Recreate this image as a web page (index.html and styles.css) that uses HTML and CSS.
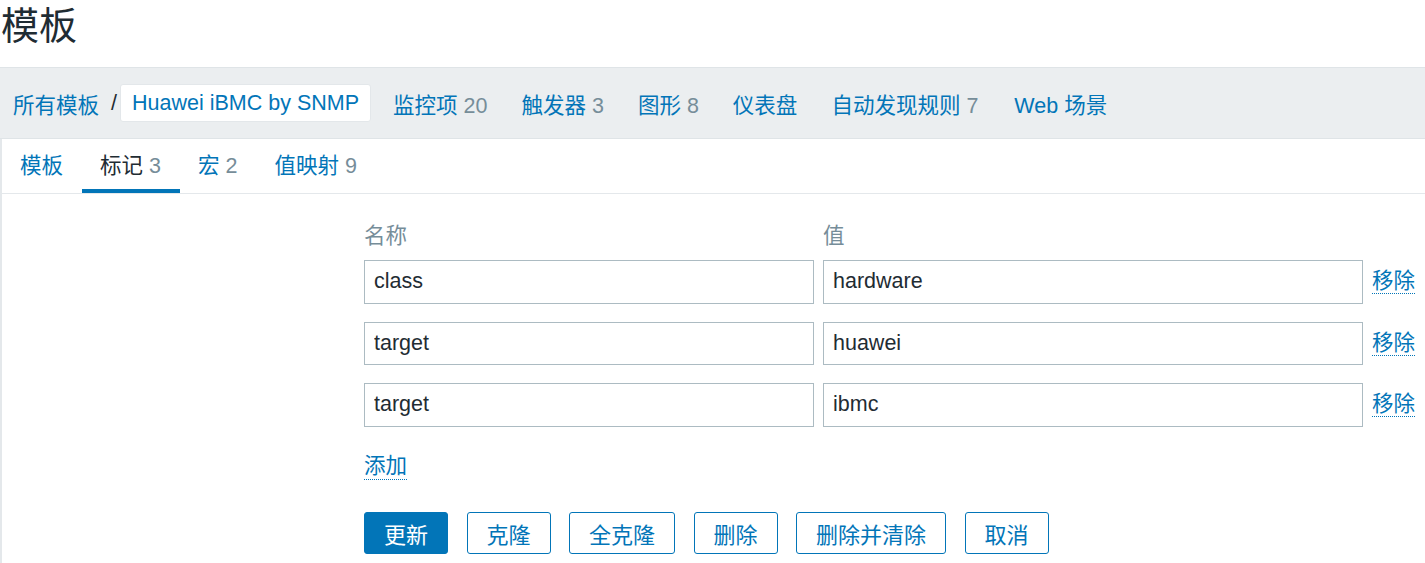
FILE: index.html
```html
<!DOCTYPE html>
<html lang="zh-CN">
<head>
<meta charset="utf-8">
<title>模板</title>
<link rel="stylesheet" href="styles.css">
</head>
<body>
<header class="page-header">
  <h1 class="page-title">模板</h1>
</header>
<nav class="header-bar">
  <div class="breadcrumbs">
    <a class="link" href="#">所有模板</a>
    <span class="crumb-sep">/</span>
    <span class="crumb-current"><a class="link" href="#">Huawei iBMC by SNMP</a></span>
  </div>
  <ul class="object-nav">
    <li><a class="link" href="#">监控项</a> <span class="count">20</span></li>
    <li><a class="link" href="#">触发器</a> <span class="count">3</span></li>
    <li><a class="link" href="#">图形</a> <span class="count">8</span></li>
    <li><a class="link" href="#">仪表盘</a></li>
    <li><a class="link" href="#">自动发现规则</a> <span class="count">7</span></li>
    <li><a class="link" href="#">Web 场景</a></li>
  </ul>
</nav>
<main class="content">
  <ul class="tabs">
    <li class="tab"><a class="link" href="#">模板</a></li>
    <li class="tab tab-active"><span>标记</span> <span class="count">3</span></li>
    <li class="tab"><a class="link" href="#">宏</a> <span class="count">2</span></li>
    <li class="tab"><a class="link" href="#">值映射</a> <span class="count">9</span></li>
  </ul>
  <form class="tag-form">
    <div class="tag-head">
      <span class="col-name">名称</span>
      <span class="col-value">值</span>
    </div>
    <div class="tag-row">
      <input class="field field-name" type="text" value="class">
      <input class="field field-value" type="text" value="hardware">
      <a class="link dotted" href="#">移除</a>
    </div>
    <div class="tag-row">
      <input class="field field-name" type="text" value="target">
      <input class="field field-value" type="text" value="huawei">
      <a class="link dotted" href="#">移除</a>
    </div>
    <div class="tag-row">
      <input class="field field-name" type="text" value="target">
      <input class="field field-value" type="text" value="ibmc">
      <a class="link dotted" href="#">移除</a>
    </div>
    <div class="add-row">
      <a class="link dotted" href="#">添加</a>
    </div>
    <div class="buttons">
      <button class="btn btn-primary" type="button">更新</button>
      <button class="btn" type="button">克隆</button>
      <button class="btn" type="button">全克隆</button>
      <button class="btn" type="button">删除</button>
      <button class="btn" type="button">删除并清除</button>
      <button class="btn" type="button">取消</button>
    </div>
  </form>
</main>
</body>
</html>
```

FILE: styles.css
```css
* {
  box-sizing: border-box;
}

html, body {
  margin: 0;
  padding: 0;
  background: #ffffff;
}

body {
  font-family: "Liberation Sans", "Noto Sans CJK SC", sans-serif;
  font-size: 21.5px;
  color: #1f2c33;
}

a {
  text-decoration: none;
}

ul {
  list-style: none;
  margin: 0;
  padding: 0;
}

.link {
  color: #0275b8;
}

.count {
  color: #768d99;
}

.page-header {
  height: 67px;
}

.page-title {
  margin: 0;
  font-size: 38px;
  font-weight: normal;
  line-height: 52px;
  padding-left: 1px;
  color: #1f2c33;
}

.header-bar {
  display: flex;
  align-items: center;
  height: 72px;
  background: #ebeef0;
  border-top: 1px solid #dfe4e7;
  border-bottom: 1px solid #dfe4e7;
  padding-left: 13px;
}

.breadcrumbs {
  display: flex;
  align-items: center;
}

.crumb-sep {
  margin: 0 3px 0 12px;
  color: #1f2c33;
}

.crumb-current {
  display: flex;
  align-items: center;
  height: 38px;
  padding: 0 11px 0 11px;
  background: #ffffff;
  border: 1px solid #e3e7ea;
  border-radius: 3px;
}

.object-nav {
  display: flex;
  align-items: center;
  margin-left: 22px;
  gap: 34px;
}

.object-nav li:last-child {
  margin-left: 2px;
}

.content {
  border-left: 2px solid #e4e8eb;
  min-height: 424px;
}

.tabs {
  display: flex;
  height: 55px;
  border-bottom: 1px solid #e4e8eb;
}

.tab {
  display: block;
  padding: 0 19px 0 18px;
  height: 54px;
  line-height: 54px;
}

.tab-active {
  color: #1f2c33;
  box-shadow: inset 0 -4px 0 #0275b8;
}

.tag-form {
  padding: 30px 0 0 362px;
}

.tag-head {
  display: flex;
  line-height: 24px;
  color: #768d99;
  margin-bottom: 12px;
}

.col-name {
  width: 459px;
}

.tag-row {
  display: flex;
  align-items: center;
  gap: 9px;
  margin-bottom: 18px;
}

.field {
  height: 43.5px;
  border: 1px solid #acbbc2;
  border-radius: 0;
  padding: 0 9px;
  font-family: inherit;
  font-size: 21.5px;
  color: #1f2c33;
  background: #ffffff;
  outline: none;
}

.field-name {
  width: 450px;
}

.field-value {
  width: 540px;
}

.dotted {
  border-bottom: 1px dotted #0275b8;
  line-height: 24px;
}

.add-row {
  margin-top: 27px;
  line-height: 24px;
}

.add-row .dotted {
  display: inline-block;
  line-height: 25px;
}

.buttons {
  display: flex;
  gap: 18.5px;
  margin-top: 32px;
}

.btn {
  height: 42px;
  padding: 0 19px;
  border: 1px solid #0275b8;
  border-radius: 3px;
  background: #ffffff;
  color: #0275b8;
  font-family: inherit;
  font-size: 22px;
  cursor: pointer;
}

.btn-primary {
  background: #0275b8;
  color: #ffffff;
}
```
